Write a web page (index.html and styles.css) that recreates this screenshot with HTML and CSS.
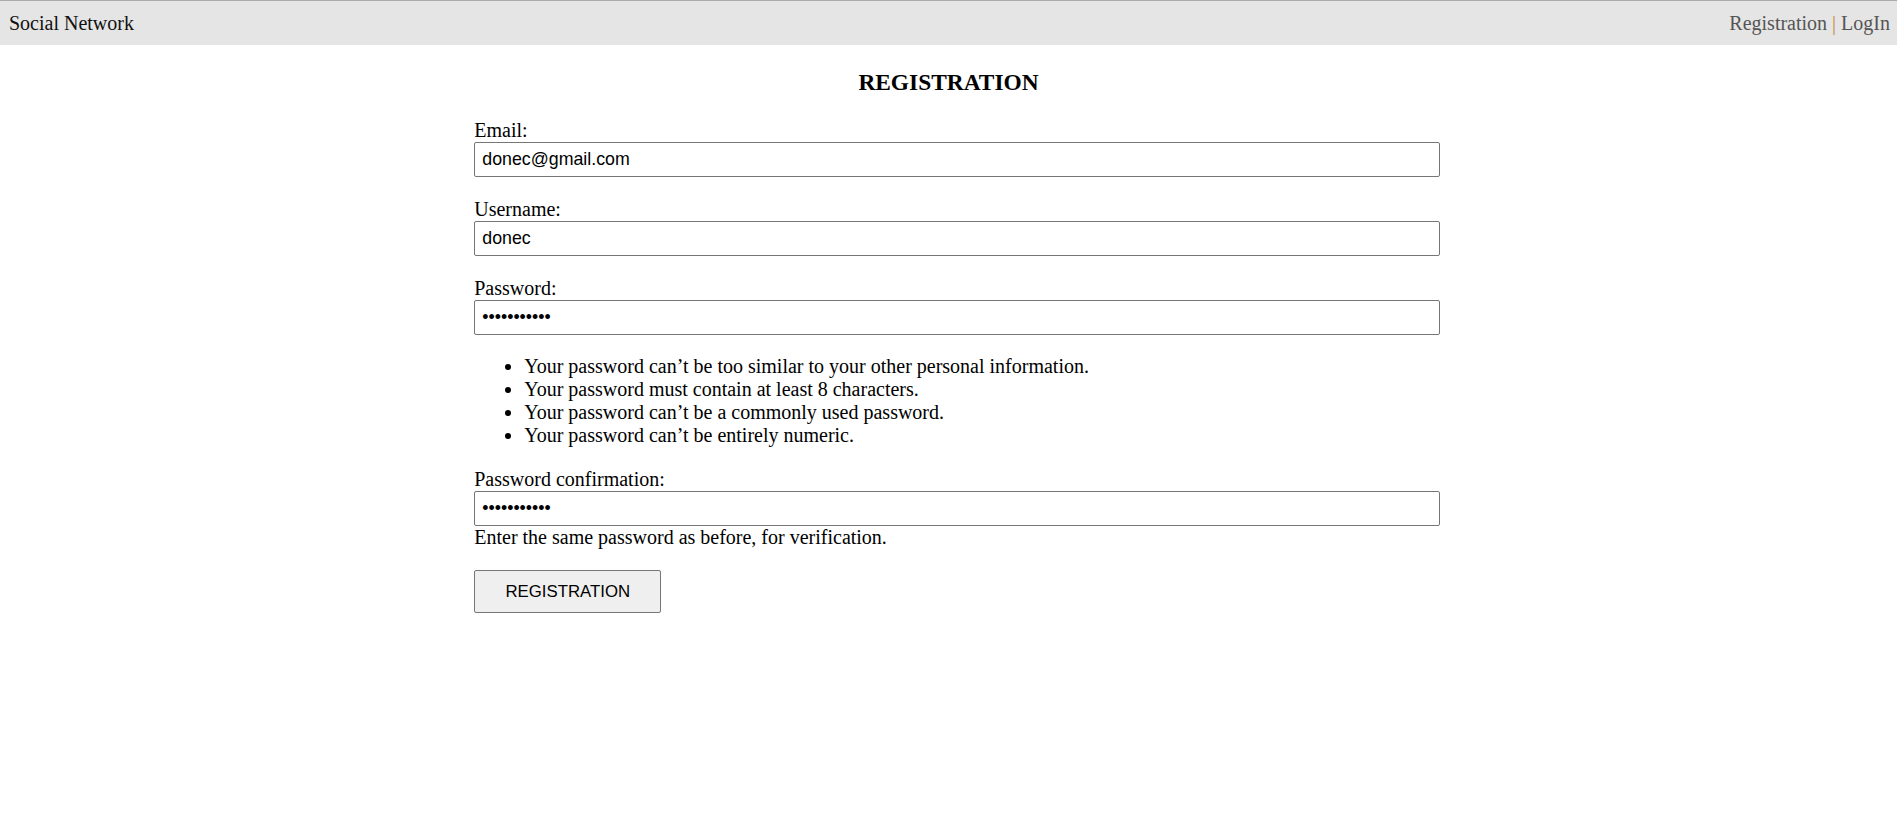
FILE: index.html
```html
<!DOCTYPE html>
<html lang="en">
<head>
<meta charset="utf-8">
<title>Registration</title>
<link rel="stylesheet" href="styles.css">
</head>
<body>
<header class="topbar">
  <a class="brand" href="#">Social Network</a>
  <nav class="nav">
    <a class="nav-link" href="#">Registration</a><span class="sep"> | </span><a class="nav-link" href="#">LogIn</a>
  </nav>
</header>

<h3 class="page-title">REGISTRATION</h3>

<form class="reg-form">
  <div class="field">
    <label class="field-label" for="email">Email:</label>
    <input class="field-input" id="email" type="text" value="donec@gmail.com">
  </div>
  <div class="field">
    <label class="field-label" for="username">Username:</label>
    <input class="field-input" id="username" type="text" value="donec">
  </div>
  <div class="field field-password">
    <label class="field-label" for="password1">Password:</label>
    <input class="field-input" id="password1" type="password" value="donecdonec1">
    <ul class="help-list">
      <li>Your password can’t be too similar to your other personal information.</li>
      <li>Your password must contain at least 8 characters.</li>
      <li>Your password can’t be a commonly used password.</li>
      <li>Your password can’t be entirely numeric.</li>
    </ul>
  </div>
  <div class="field">
    <label class="field-label" for="password2">Password confirmation:</label>
    <input class="field-input" id="password2" type="password" value="donecdonec1">
    <div class="help-text">Enter the same password as before, for verification.</div>
  </div>
  <button class="submit-btn" type="button">REGISTRATION</button>
</form>
</body>
</html>
```

FILE: styles.css
```css
html, body {
  margin: 0;
  padding: 0;
  background: #ffffff;
}

body {
  font-family: "Liberation Serif", "Times New Roman", serif;
  font-size: 20px;
  color: #000000;
}

.topbar {
  display: flex;
  justify-content: space-between;
  align-items: flex-start;
  background: #e5e5e5;
  border-top: 1px solid #aaaaaa;
  height: 45px;
  box-sizing: border-box;
  padding: 11px 7px 0 9px;
  line-height: 23px;
}

.brand {
  color: #111111;
  text-decoration: none;
}

.nav {
  color: #555555;
}

.nav-link {
  color: #555555;
  text-decoration: none;
}

.sep {
  color: #c98a3a;
}

.page-title {
  font-size: 23.4px;
  font-weight: bold;
  text-align: center;
  margin: 24px 0 23.4px;
}

.reg-form {
  margin-left: 25%;
  width: calc(50% + 17px);
}

.field {
  margin-bottom: 21px;
}

.field-label {
  display: block;
  line-height: 23px;
}

.field-input {
  display: block;
  width: 100%;
  height: 35px;
  box-sizing: border-box;
  margin: 0;
  padding: 0 7px;
  border: 1px solid #767676;
  border-radius: 2px;
  font-family: "Liberation Sans", Arial, sans-serif;
  font-size: 17.8px;
  color: #000000;
  background: #ffffff;
}

.help-list {
  margin: 20px 0 0;
  padding-left: 50px;
  line-height: 23px;
}

.help-text {
  line-height: 23px;
}

.submit-btn {
  display: block;
  width: 187px;
  height: 43px;
  box-sizing: border-box;
  padding: 0;
  margin: 0;
  border: 1px solid #767676;
  border-radius: 2px;
  background: #efefef;
  font-family: "Liberation Sans", Arial, sans-serif;
  font-size: 16.8px;
  color: #000000;
  text-align: center;
}
```
